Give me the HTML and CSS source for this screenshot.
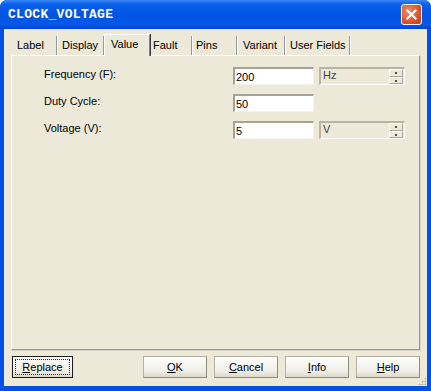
FILE: index.html
```html
<!DOCTYPE html>
<html lang="en">
<head>
    <meta charset="UTF-8">
    <title>CLOCK_VOLTAGE</title>
    <link rel="stylesheet" href="styles.css">
</head>
<body>
    <div class="window">
        <div class="titlebar">
            <span class="title">CLOCK_VOLTAGE</span>
            <span class="close">
                <svg width="21" height="21" viewBox="0 0 21 21">
                    <path d="M6 6 L15 15 M15 6 L6 15" stroke="#fff" stroke-width="2.2" stroke-linecap="square"/>
                </svg>
            </span>
        </div>
        <div class="client">
            <div class="tabs">
                <div class="tab t1">Label</div>
                <div class="tab t2">Display</div>
                <div class="tab t3 selected">Value</div>
                <div class="tab t4">Fault</div>
                <div class="tab t5">Pins</div>
                <div class="tab t6">Variant</div>
                <div class="tab t7">User Fields</div>
            </div>
            <div class="panel">
                <div class="row">
                    <label class="lbl">Frequency (F):</label>
                    <div class="edit">200</div>
                    <div class="spin">
                        <span class="unit">Hz</span>
                        <span class="arrows"><span class="up"></span><span class="down"></span></span>
                    </div>
                </div>
                <div class="row">
                    <label class="lbl">Duty Cycle:</label>
                    <div class="edit">50</div>
                </div>
                <div class="row">
                    <label class="lbl">Voltage (V):</label>
                    <div class="edit">5</div>
                    <div class="spin">
                        <span class="unit">V</span>
                        <span class="arrows"><span class="up"></span><span class="down"></span></span>
                    </div>
                </div>
            </div>
            <div class="buttons">
                <button class="btn replace"><span class="focus"><u>R</u>eplace</span></button>
                <div class="right-buttons">
                    <button class="btn"><u>O</u>K</button>
                    <button class="btn"><u>C</u>ancel</button>
                    <button class="btn"><u>I</u>nfo</button>
                    <button class="btn"><u>H</u>elp</button>
                </div>
            </div>
            <div class="grip"></div>
        </div>
    </div>
</body>
</html>
```

FILE: styles.css
```css
body {
    margin: 0;
    background: #ffffff;
    font-family: "Liberation Sans", Arial, sans-serif;
    font-size: 11px;
}

.window {
    width: 431px;
    height: 391px;
    display: flex;
    flex-direction: column;
    background: #0550e4;
    border-radius: 7px 7px 0 0;
    overflow: hidden;
}

.titlebar {
    height: 29px;
    flex: none;
    display: flex;
    align-items: center;
    justify-content: space-between;
    padding: 0 9px 0 8px;
    background: linear-gradient(#3a86f5 0%, #0860ea 15%, #0054e3 50%, #0659e6 85%, #0043d2 100%);
}

.title {
    font-family: "Liberation Mono", "Courier New", monospace;
    font-weight: bold;
    font-size: 13px;
    color: #fff;
    letter-spacing: 0.3px;
}

.close {
    width: 21px;
    height: 21px;
    border: 1px solid #fff;
    border-radius: 3px;
    background: radial-gradient(circle at 35% 35%, #f0906c, #e0502a 60%, #c03a14);
    box-sizing: border-box;
    display: flex;
    align-items: center;
    justify-content: center;
}

.close svg {
    width: 19px;
    height: 19px;
}

.client {
    flex: 1;
    background: #ece9d8;
    margin: 0 4px 5px 4px;
    padding: 4px 7px 0 7px;
    display: flex;
    flex-direction: column;
    position: relative;
}

.tabs {
    display: flex;
    height: 22px;
    align-items: flex-end;
}

.tab {
    height: 19px;
    box-sizing: border-box;
    padding: 3px 0 0 6px;
    color: #000;
    border-right: 1px solid #919b9c;
    box-shadow: 1px 0 0 #fff;
}

.tab.selected {
    height: 22px;
    padding-top: 3px;
    border-left: 1px solid #fff;
    border-top: 1px solid #fff;
    border-right: 1px solid #808080;
    box-shadow: 1px 0 0 #404040;
    background: #ece9d8;
    margin-bottom: -1px;
    position: relative;
    z-index: 1;
}

.t1 { width: 46px; }
.t2 { width: 47px; padding-left: 5px; }
.t3 { width: 46px; }
.t4 { width: 42px; padding-left: 3px; }
.t5 { width: 45px; padding-left: 4px; }
.t6 { width: 48px; }
.t7 { width: 65px; padding-left: 5px; }

.panel {
    height: 295px;
    box-sizing: border-box;
    width: 409px;
    border-top: 1px solid #fff;
    border-left: 1px solid #fff;
    border-right: 1px solid #919b9c;
    border-bottom: 1px solid #919b9c;
    box-shadow: 1px 1px 0 #d4d0c8;
    padding: 11px 0 0 32px;
    display: flex;
    flex-direction: column;
    gap: 9px;
}

.row {
    display: flex;
    align-items: center;
    height: 18px;
}

.lbl {
    width: 189px;
    color: #000;
    margin-top: -4px;
}

.edit {
    width: 81px;
    height: 18px;
    box-sizing: border-box;
    background: #fff;
    border-top: 2px solid #a7a394;
    border-left: 2px solid #a7a394;
    border-bottom: 1px solid #f4f3ee;
    border-right: 1px solid #f4f3ee;
    padding: 2px 0 0 1px;
    line-height: 13px;
    color: #000;
}

.spin {
    width: 86px;
    height: 18px;
    margin-left: 5px;
    box-sizing: border-box;
    background: #ece9d8;
    border-top: 2px solid #b8b4a2;
    border-left: 2px solid #b8b4a2;
    border-bottom: 1px solid #fff;
    border-right: 1px solid #fff;
    display: flex;
    justify-content: space-between;
    padding: 0 1px 0 2px;
}

.unit {
    color: #404040;
    line-height: 13px;
}

.arrows {
    width: 14px;
    display: flex;
    flex-direction: column;
}

.up, .down {
    flex: 1;
    border-top: 1px solid #fff;
    border-left: 1px solid #fff;
    border-right: 1px solid #aca899;
    border-bottom: 1px solid #aca899;
    position: relative;
}

.up::after, .down::after {
    content: "";
    position: absolute;
    left: 5px;
    top: 2px;
    width: 2px;
    height: 2px;
    background: #4d4d4d;
}

.buttons {
    display: flex;
    justify-content: space-between;
    margin-top: 6px;
    padding-left: 1px;
}

.right-buttons {
    display: flex;
    gap: 7px;
}

.btn {
    height: 22px;
    width: 64px;
    font-family: "Liberation Sans", Arial, sans-serif;
    font-size: 11px;
    color: #000;
    background: linear-gradient(#fdfdfb, #f0efe8 70%, #dcd8c8);
    border: 1px solid #b4b1a0;
    border-right-color: #8f8c7c;
    border-bottom-color: #8f8c7c;
    padding: 0;
}

.btn.replace {
    width: 61px;
    border: 1px solid #1c1c1c;
    padding: 2px;
}

.btn .focus {
    display: block;
    height: 100%;
    box-sizing: border-box;
    border: 1px dotted #333;
    line-height: 14px;
}

.btn u {
    text-decoration: underline;
}

.grip {
    position: absolute;
    right: 1px;
    bottom: 1px;
    width: 8px;
    height: 8px;
    background:
        radial-gradient(circle, #b0ad9e 45%, transparent 50%) 0 0 / 3px 3px;
    clip-path: polygon(100% 0, 100% 100%, 0 100%);
}
```
